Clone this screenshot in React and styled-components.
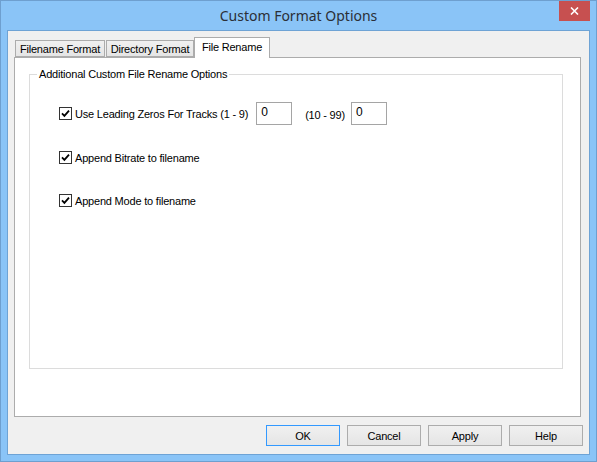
import React from "react";
import styled, { createGlobalStyle } from "styled-components";

const Global = createGlobalStyle`
  html, body { margin: 0; padding: 0; background: #fff; }
  body { font-family: "Liberation Sans", Arial, sans-serif; }
`;

const Window = styled.div`
  box-sizing: border-box;
  width: 597px;
  height: 462px;
  background: #8ac4f7;
  border: 1px solid #6e9fcf;
  padding: 0 6px 6px 6px;
  display: flex;
  flex-direction: column;
`;

const TitleBar = styled.div`
  height: 29px;
  display: grid;
  grid-template-columns: 1fr auto 1fr;
  align-items: start;
  margin: 0 -6px 0 -6px;
`;

const Title = styled.div`
  grid-column: 2;
  font-family: "Noto Sans", "Open Sans", sans-serif;
  font-size: 14px;
  color: #2b2f36;
  line-height: 29px;
  letter-spacing: 0;
`;

const CloseButton = styled.div`
  grid-column: 3;
  justify-self: end;
  margin-right: 6px;
  width: 31px;
  height: 20px;
  background: #c75050;
  display: flex;
  align-items: center;
  justify-content: center;
`;

const Client = styled.div`
  flex: 1;
  box-sizing: border-box;
  border: 1px solid #6ea3d5;
  background: #f0f0f0;
  padding: 7px 6px 8px 6px;
  display: flex;
  flex-direction: column;
  font-size: 11px;
  letter-spacing: -0.2px;
  color: #000;
`;

const TabStrip = styled.div`
  display: flex;
  align-items: flex-end;
  height: 20px;
  padding-left: 1px;
  margin-bottom: -1px;
  position: relative;
  z-index: 1;
`;

const Tab = styled.div`
  box-sizing: border-box;
  height: ${(p) => (p.$active ? "21px" : "17px")};
  margin-bottom: ${(p) => (p.$active ? "0" : "1px")};
  width: ${(p) => p.$w}px;
  border: 1px solid #acacac;
  border-bottom: ${(p) => (p.$active ? "none" : "1px solid #acacac")};
  background: ${(p) => (p.$active ? "#fff" : "linear-gradient(#f0f0f0, #e5e5e5)")};
  display: flex;
  align-items: ${(p) => (p.$active ? "flex-start" : "center")};
  padding-top: ${(p) => (p.$active ? "3px" : "0")};
  justify-content: center;
  font-size: 11px;
  margin-left: ${(p) => (p.$gap ? "1px" : "0")};
`;

const Panel = styled.div`
  flex: 1;
  box-sizing: border-box;
  border: 1px solid #acacac;
  background: #fff;
  padding: 10px 17px 47px 14px;
  margin-right: 2px;
  display: flex;
`;

const Group = styled.fieldset`
  flex: 1;
  margin: 0;
  padding: 0 0 0 29px;
  border: 1px solid #dcdcdc;
  display: flex;
  flex-direction: column;
`;

const Legend = styled.legend`
  margin-left: -22px;
  padding: 0 2px;
  font-size: 11px;
  line-height: 13px;
`;

const Row = styled.div`
  display: flex;
  align-items: center;
  height: 23px;
  margin-top: ${(p) => p.$mt}px;
`;

const Box = styled.span`
  box-sizing: border-box;
  width: 13px;
  height: 13px;
  border: 1px solid #333;
  background: #fff;
  display: inline-flex;
  align-items: center;
  justify-content: center;
  margin-right: 3px;
  flex: none;
`;

const Label = styled.span`
  font-size: 11px;
  white-space: nowrap;
`;

const Field = styled.div`
  box-sizing: border-box;
  width: 36px;
  height: 23px;
  border: 1px solid #a5a5a5;
  background: #fff;
  padding: 2px 0 0 4px;
  font-size: 12px;
  margin-left: ${(p) => p.$ml}px;
  align-self: flex-start;
`;

const RangeText = styled.span`
  font-size: 11px;
  margin-left: 13px;
  margin-top: 2px;
`;

const ButtonRow = styled.div`
  display: flex;
  justify-content: flex-end;
  gap: 7px;
  padding-top: 8px;
`;

const Button = styled.div`
  box-sizing: border-box;
  width: 74px;
  height: 21px;
  border: 1px solid ${(p) => (p.$default ? "#3399ff" : "#acacac")};
  background: linear-gradient(#f0f0f0, #e5e5e5);
  display: flex;
  align-items: center;
  justify-content: center;
  font-size: 11px;
  padding-top: 1px;
`;

const Check = () => (
  <Box>
    <svg width="9" height="9" viewBox="0 0 9 9">
      <path d="M1 4.3 L3.4 6.8 L8 1.6" fill="none" stroke="#000" strokeWidth="1.8" />
    </svg>
  </Box>
);

export default function App() {
  return (
    <>
      <Global />
      <Window>
        <TitleBar>
          <Title>Custom Format Options</Title>
          <CloseButton>
            <svg width="9" height="8" viewBox="0 0 9 8">
              <path d="M1 0.5 L8 7.5 M8 0.5 L1 7.5" stroke="#fff" strokeWidth="1.6" />
            </svg>
          </CloseButton>
        </TitleBar>
        <Client>
          <TabStrip>
            <Tab $w={90}>Filename Format</Tab>
            <Tab $w={88} $gap>Directory Format</Tab>
            <Tab $w={76} $active>File Rename</Tab>
          </TabStrip>
          <Panel>
            <Group>
              <Legend>Additional Custom File Rename Options</Legend>
              <Row $mt={21}>
                <Check />
                <Label>Use Leading Zeros For Tracks (1 - 9)</Label>
                <Field $ml={8}>0</Field>
                <RangeText>(10 - 99)</RangeText>
                <Field $ml={6}>0</Field>
              </Row>
              <Row $mt={21}>
                <Check />
                <Label>Append Bitrate to filename</Label>
              </Row>
              <Row $mt={20}>
                <Check />
                <Label>Append Mode to filename</Label>
              </Row>
            </Group>
          </Panel>
          <ButtonRow>
            <Button $default>OK</Button>
            <Button>Cancel</Button>
            <Button>Apply</Button>
            <Button>Help</Button>
          </ButtonRow>
        </Client>
      </Window>
    </>
  );
}
